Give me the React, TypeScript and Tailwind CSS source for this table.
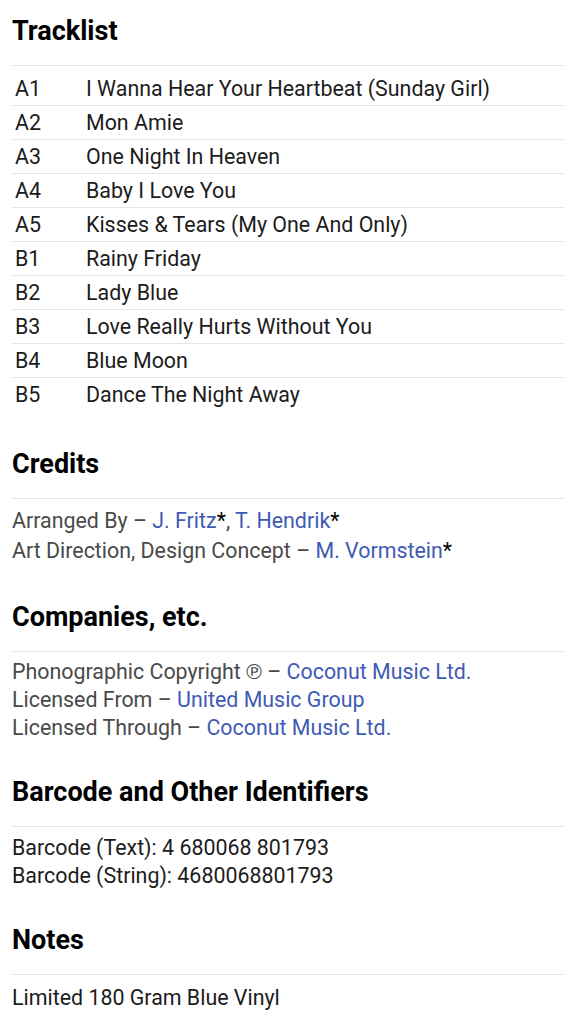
const tracks: [string, string][] = [
  ["A1", "I Wanna Hear Your Heartbeat (Sunday Girl)"],
  ["A2", "Mon Amie"],
  ["A3", "One Night In Heaven"],
  ["A4", "Baby I Love You"],
  ["A5", "Kisses & Tears (My One And Only)"],
  ["B1", "Rainy Friday"],
  ["B2", "Lady Blue"],
  ["B3", "Love Really Hurts Without You"],
  ["B4", "Blue Moon"],
  ["B5", "Dance The Night Away"],
];

function Heading({ children }: { children: React.ReactNode }) {
  return (
    <h2 className="text-[27px] leading-[28px] font-bold text-black pb-[20px] border-b border-[#e6e6e6]">
      {children}
    </h2>
  );
}

function Link({ children }: { children: React.ReactNode }) {
  return <a className="text-[#3f5bb3]">{children}</a>;
}

export default function App() {
  return (
    <div
      className="min-h-screen bg-white px-3 pt-[17px] pb-6 text-[21.4px] leading-[28px] text-[#1c1c1c]"
      style={{ fontFamily: "Roboto, 'Liberation Sans', sans-serif" }}
    >
      {/* Tracklist */}
      <section>
        <Heading>Tracklist</Heading>
        <div className="mt-[6px] divide-y divide-[#e6e6e6]">
          {tracks.map(([pos, title]) => (
            <div key={pos} className="flex items-center h-[34px] last:h-[33px]">
              <span className="w-[74px] pl-[3px] shrink-0">{pos}</span>
              <span>{title}</span>
            </div>
          ))}
        </div>
      </section>

      {/* Credits */}
      <section className="mt-[39px]">
        <Heading>Credits</Heading>
        <div className="mt-[7px] text-[#4a4a4a]">
          <div className="leading-[30px]">
            Arranged By – <Link>J. Fritz</Link>
            <span className="text-black">*</span>,{" "}
            <Link>T. Hendrik</Link>
            <span className="text-black">*</span>
          </div>
          <div className="leading-[30px]">
            Art Direction, Design Concept – <Link>M. Vormstein</Link>
            <span className="text-black">*</span>
          </div>
        </div>
      </section>

      {/* Companies */}
      <section className="mt-[37px]">
        <Heading>Companies, etc.</Heading>
        <div className="mt-[6px] text-[#4a4a4a]">
          <div>
            Phonographic Copyright ℗ – <Link>Coconut Music Ltd.</Link>
          </div>
          <div>
            Licensed From – <Link>United Music Group</Link>
          </div>
          <div>
            Licensed Through – <Link>Coconut Music Ltd.</Link>
          </div>
        </div>
      </section>

      {/* Barcode */}
      <section className="mt-[36px]">
        <Heading>Barcode and Other Identifiers</Heading>
        <div className="mt-[7px]">
          <div>Barcode (Text): 4 680068 801793</div>
          <div>Barcode (String): 4680068801793</div>
        </div>
      </section>

      {/* Notes */}
      <section className="mt-[36px]">
        <Heading>Notes</Heading>
        <div className="mt-[9px]">Limited 180 Gram Blue Vinyl</div>
      </section>
    </div>
  );
}
